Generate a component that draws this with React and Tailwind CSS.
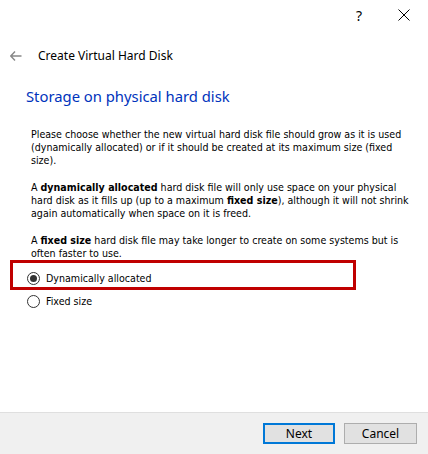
import React from 'react';

const Radio = ({ checked, label }) => (
  <div className="flex items-center h-[23px]">
    <span className="w-[13px] h-[13px] rounded-full border border-[#333333] bg-white flex items-center justify-center">
      {checked && <span className="w-[7px] h-[7px] rounded-full bg-[#333333]" />}
    </span>
    <span className="ml-[6px]">{label}</span>
  </div>
);

const App = () => {
  return (
    <div className="w-[428px] h-[454px] bg-white flex flex-col text-black" style={{ fontFamily: '"Noto Sans", sans-serif' }}>
      {/* barra de título */}
      <div className="h-[30px] flex items-center justify-end">
        <span className="text-[14px] mr-[36px]">?</span>
        <svg width="12" height="12" viewBox="0 0 12 12" className="mr-[18px]">
          <path d="M0.5 0.5 L11.5 11.5 M11.5 0.5 L0.5 11.5" stroke="#000" strokeWidth="1" />
        </svg>
      </div>

      {/* encabezado */}
      <div className="flex items-center h-[48px] pl-[10px] pt-[4px]">
        <svg width="12" height="10" viewBox="0 0 12 10">
          <path d="M5 0.5 L0.8 5 L5 9.5 M0.8 5 H11.5" stroke="#888" strokeWidth="1.4" fill="none" />
        </svg>
        <span className="ml-[16px] text-[12px]">Create Virtual Hard Disk</span>
      </div>

      <div className="pl-[26px] text-[14.8px] text-[#0033bc] h-[36px] flex items-center">
        Storage on physical hard disk
      </div>

      {/* contenido */}
      <div className="pl-[31px] pt-[14px] text-[10.6px] leading-[13px] flex-1" style={{ fontFamily: '"DejaVu Sans Condensed", "DejaVu Sans", sans-serif' }}>
        <p>
          Please choose whether the new virtual hard disk file should grow as it is used<br />
          (dynamically allocated) or if it should be created at its maximum size (fixed<br />
          size).
        </p>
        <p className="mt-[14px]">
          A <b>dynamically allocated</b> hard disk file will only use space on your physical<br />
          hard disk as it fills up (up to a maximum <b>fixed size</b>), although it will not shrink<br />
          again automatically when space on it is freed.
        </p>
        <p className="mt-[14px]">
          A <b>fixed size</b> hard disk file may take longer to create on some systems but is<br />
          often faster to use.
        </p>

        <div className="mt-[7px] -ml-[4px]">
          <div className="relative">
            <Radio checked label="Dynamically allocated" />
            {/* marco rojo de resaltado */}
            <div className="absolute left-[-17px] top-[-7px] w-[346px] h-[30px] border-[3px] border-[#c00000] pointer-events-none" />
          </div>
          <Radio label="Fixed size" />
        </div>
      </div>

      {/* pie */}
      <div className="h-[42px] bg-[#f0f0f0] border-t border-[#dfdfdf] flex items-center justify-end gap-[9px] pr-[11px]">
        <button className="w-[72px] h-[21px] bg-[#e1e1e1] border-2 border-[#0078d7] text-[12px]">Next</button>
        <button className="w-[73px] h-[21px] bg-[#e1e1e1] border border-[#adadad] text-[12px]">Cancel</button>
      </div>
    </div>
  );
};

export default App;
